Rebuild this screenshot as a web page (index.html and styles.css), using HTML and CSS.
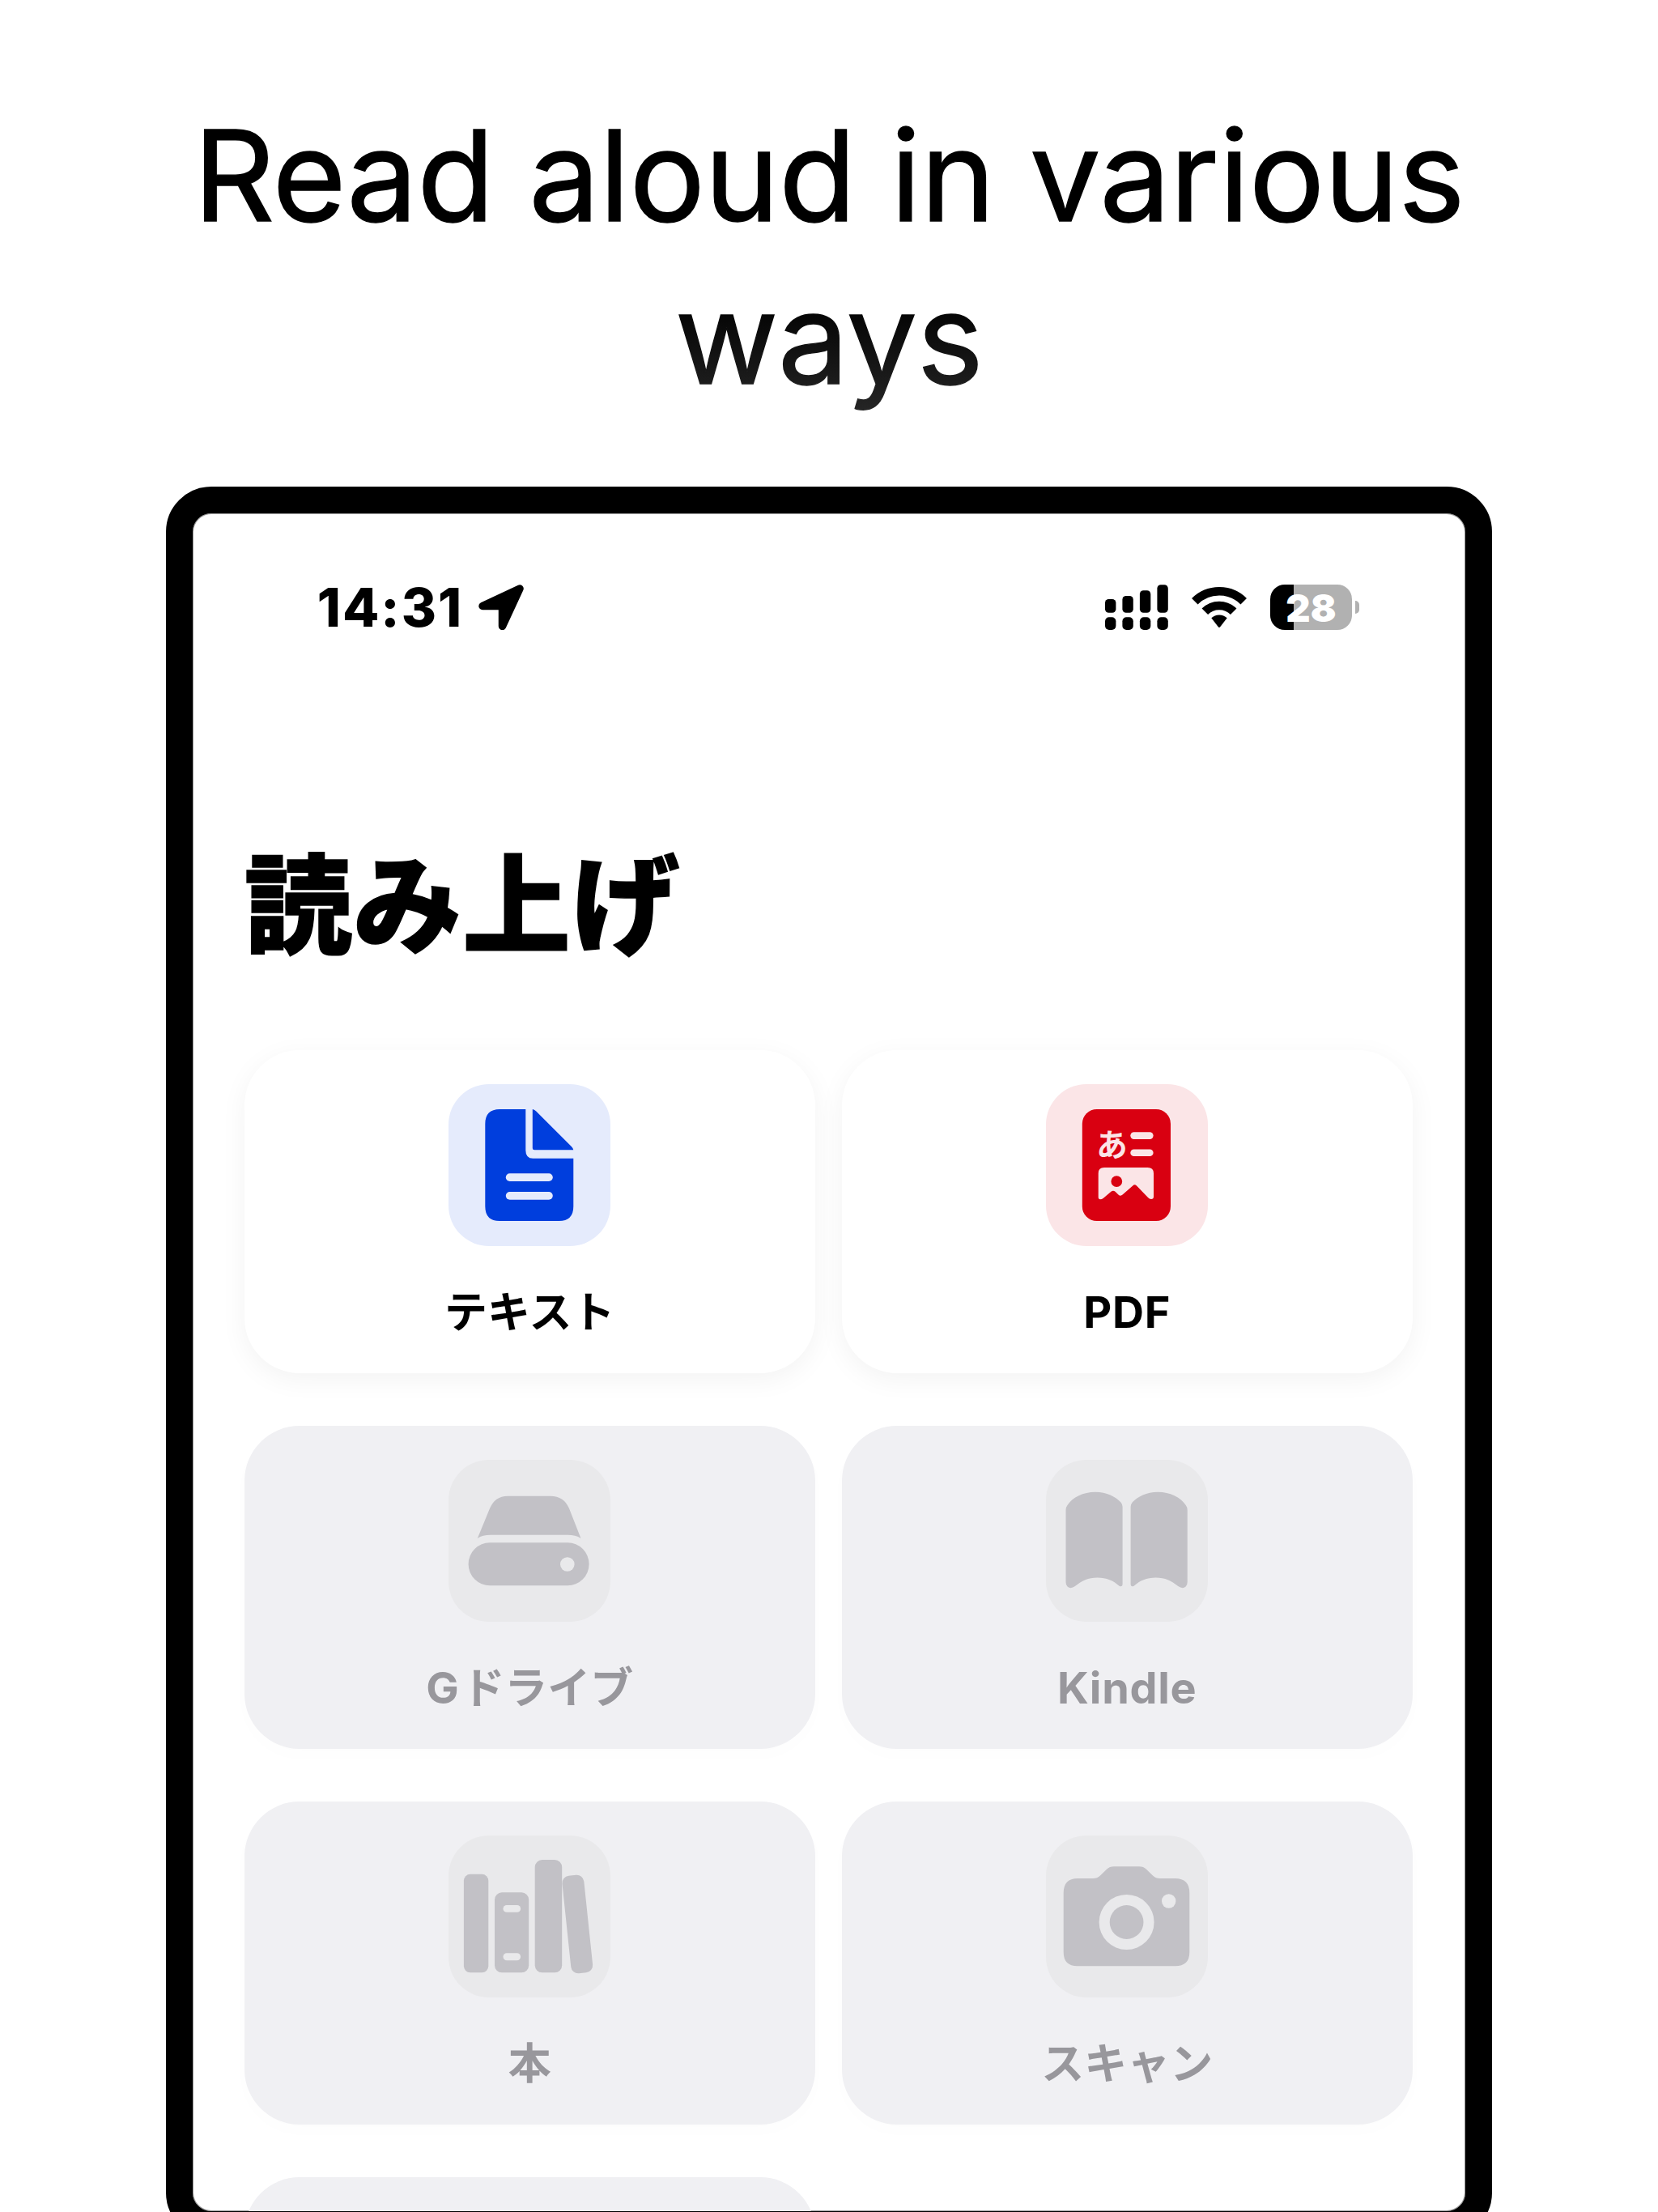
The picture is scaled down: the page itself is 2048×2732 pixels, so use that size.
FILE: index.html
```html
<!DOCTYPE html>
<html lang="ja">
<head>
<meta charset="utf-8">
<title>Read aloud in various ways</title>
<link rel="stylesheet" href="styles.css">
</head>
<body>
<h1 class="headline" lang="en">Read aloud in various ways</h1>
<main class="device">
  <header class="status">
    <div class="status-left">
      <span class="time">14:31</span>
      <svg class="location" viewBox="0 0 56 56"><path d="M5 26.5 51 5 29.5 51.5V26.5Z" stroke="#000" stroke-width="9.5" stroke-linejoin="round"/></svg>
    </div>
    <div class="status-right">
      <svg class="signal" viewBox="0 0 78 56">
        <rect x="0" y="18" width="13.4" height="16.7" rx="4.5"/><rect x="21.4" y="14" width="13.4" height="20.7" rx="4.5"/><rect x="42.9" y="7.3" width="13.4" height="27.4" rx="4.5"/><rect x="64.4" y="0.3" width="13.4" height="34.4" rx="4.5"/>
        <rect x="0" y="40.3" width="13.4" height="15.7" rx="5"/><rect x="21.4" y="40.3" width="13.4" height="15.7" rx="5"/><rect x="42.9" y="40.3" width="13.4" height="15.7" rx="5"/><rect x="64.4" y="40.3" width="13.4" height="15.7" rx="5"/>
      </svg>
      <svg class="wifi" viewBox="0 0 68 56"><g fill="none" stroke="#000" stroke-width="10.6"><path d="M3.8 20.8A42.7 42.7 0 0 1 64.2 20.8"/><path d="M16.3 33.3A25 25 0 0 1 51.7 33.3"/></g><path d="M24.3 41.3A14 14 0 0 1 43.7 41.3L35.2 52.3Q34 53.8 32.8 52.3Z"/></svg>
      <div class="battery"><div class="battery-body"><span class="battery-level">28</span></div><div class="battery-nub"></div></div>
    </div>
  </header>
  <h2 class="title">読み上げ</h2>
  <section class="grid">
    <article class="card">
      <svg class="icon icon-text" viewBox="0 0 200 200">
        <path d="M63.3 31H95.3V81.7Q95.3 91.7 104.3 91.7H154.3V151Q154.3 169 136.3 169H63.3Q45.3 169 45.3 151V49Q45.3 31 63.3 31Z"/>
        <path d="M103.8 31Q106 31.2 108 33.2L151.8 77Q154.3 79.5 154.3 81.3H106.3Q103.8 81.3 103.8 78.8Z"/>
        <g class="cut"><rect x="70.8" y="110.3" width="58" height="9.7" rx="4.8"/><rect x="70.8" y="133" width="58" height="9.7" rx="4.8"/></g>
      </svg>
      <h3 class="label">テキスト</h3>
    </article>
    <article class="card">
      <svg class="icon icon-pdf" viewBox="0 0 200 200">
        <rect x="44.8" y="31" width="109.2" height="138" rx="18"/>
        <g class="cut"><text class="kana" x="81.5" y="88.8" text-anchor="middle">あ</text>
        <rect x="104.3" y="59.3" width="28.3" height="8.6" rx="4.3"/><rect x="104.3" y="80.5" width="28.3" height="8.6" rx="4.3"/>
        <path fill-rule="evenodd" d="M72 103H125.5Q133 103 133 110V139Q133 142 130 142Q127.6 142 126 140L112 125.6Q109.6 123 107.2 125.4L94.6 136.6Q92 139 89.4 136.4L85.6 132.8Q83 130.5 80.4 132.8L71 140.8Q69 142.3 67 142.3Q64.7 142.3 64.7 139.5V110Q64.7 103 72 103ZM87.3 113.2A6.9 6.9 0 1 0 87.3 127A6.9 6.9 0 1 0 87.3 113.2Z"/></g>
      </svg>
      <h3 class="label"><span class="latin">PDF</span></h3>
    </article>
    <article class="card disabled">
      <svg class="icon" viewBox="0 0 200 200">
        <path d="M73 44.7H126Q142.5 44.7 149 60L163.5 96.9Q157 92.7 147 92.7H52Q42 92.7 35.8 96.9L51 60Q57.5 44.7 73 44.7Z"/>
        <rect x="24.6" y="102.3" width="149" height="53" rx="26.5"/><circle class="cut" cx="146.8" cy="129" r="8.8"/>
      </svg>
      <h3 class="label"><span class="latin initial">G</span>ドライブ</h3>
    </article>
    <article class="card disabled">
      <svg class="icon" viewBox="0 0 200 200">
        <path d="M24.5 62Q24.5 58.5 26.5 56C33 46 46 39.7 61 39.7C75 39.7 86 45.5 92.5 52.5Q94.6 55 94.6 58V153Q94.6 157.5 90.5 155.7C83 149 75 145.4 63.5 145.4C52 145.4 44.5 149 36 156Q30.5 160 26.5 156.5Q24.5 154.5 24.5 151Z"/>
        <path d="M174.7 62Q174.7 58.5 172.7 56C166.2 46 153.2 39.7 138.2 39.7C124.2 39.7 113.2 45.5 106.7 52.5Q104.6 55 104.6 58V153Q104.6 157.5 108.7 155.7C116.2 149 124.2 145.4 135.7 145.4C147.2 145.4 154.7 149 163.2 156Q168.7 160 172.7 156.5Q174.7 154.5 174.7 151Z"/>
      </svg>
      <h3 class="label"><span class="latin">Kindle</span></h3>
    </article>
    <article class="card disabled">
      <svg class="icon" viewBox="0 0 200 200">
        <rect x="18.9" y="47.8" width="30.4" height="121.5" rx="8"/>
        <rect x="57" y="70.3" width="42.2" height="99" rx="9"/>
        <rect x="106.7" y="30" width="33.5" height="139.3" rx="9"/>
        <rect x="145.8" y="49" width="27" height="121" rx="9" transform="rotate(-6 159.3 109.5)"/>
        <g class="cut"><rect x="67.5" y="86" width="21.6" height="8.8" rx="4.4"/><rect x="67.5" y="145.3" width="21.6" height="9" rx="4.5"/></g>
      </svg>
      <h3 class="label">本</h3>
    </article>
    <article class="card disabled">
      <svg class="icon" viewBox="0 0 200 200">
        <path d="M39 53H58Q63.5 53 67 49.5L75 41.7Q78.5 38.3 84 38.3H115Q120.5 38.3 124 41.7L132 49.5Q135.5 53 141 53H159.5Q177.3 53 177.3 71V144Q177.3 161.3 159.5 161.3H39Q21.7 161.3 21.7 144V71Q21.7 53 39 53Z"/>
        <circle class="cut" cx="99.6" cy="107" r="34"/><circle cx="99.6" cy="107" r="20.9"/><circle class="cut" cx="151.7" cy="81" r="8.7"/>
      </svg>
      <h3 class="label">スキャン</h3>
    </article>
    <article class="card disabled"></article>
  </section>
</main>
</body>
</html>
```
FILE: styles.css
```css
* { box-sizing: border-box; }

body {
  margin: 0;
  height: 2732px;
  padding-top: 115.5px;
  overflow: hidden;
  background: #fff;
  color: #000;
  font-family: Inter, "Noto Sans CJK JP", sans-serif;
}

h1, h2, h3 { margin: 0; }
svg { display: block; flex: none; }

.headline {
  width: 1640px;
  height: 485.5px;
  margin: 0 auto;
  text-align: center;
  font-size: 156px;
  font-weight: 400;
  line-height: 201.7px;
  letter-spacing: -0.65px;
  background: linear-gradient(#000 250px, #262626 395px);
  -webkit-background-clip: text;
  background-clip: text;
  color: transparent;
  -webkit-text-stroke: 1.4px transparent;
}

.device {
  width: 1638.4px;
  height: 2163px;
  margin: 0 auto;
  padding: 88px 65.5px 0 64px;
  border: 33.4px solid #000;
  border-radius: 56px;
  overflow: hidden;
  background: #fff;
  box-shadow: inset 0 0 0 1px #999;
}

.status {
  display: flex;
  justify-content: space-between;
  height: 56px;
  padding: 0 65.5px 0 90px;
}

.status-left, .status-right { display: flex; align-items: center; }
.status-left { gap: 19px; }

.time {
  font-size: 66px;
  font-weight: 800;
  line-height: 58px;
  letter-spacing: 2px;
}

.location { width: 56px; height: 56px; }
.signal { width: 78px; height: 56px; margin-right: 29px; }
.wifi { width: 68px; height: 56px; margin-right: 29px; }

.battery { display: flex; align-items: center; gap: 4px; }

.battery-body {
  width: 100.5px;
  height: 56px;
  border-radius: 18px;
  background: linear-gradient(90deg, #000 29px, #b1b1b1 29px);
  text-align: center;
}

.battery-level {
  color: #fff;
  font-size: 47px;
  font-weight: 900;
  line-height: 57px;
}

.battery-nub {
  width: 5.5px;
  height: 16px;
  border-radius: 0 6px 6px 0;
  background: #b1b1b1;
}

.title {
  margin-top: 261px;
  font-family: "Noto Sans CJK JP", sans-serif;
  font-size: 133.5px;
  font-weight: 900;
  line-height: 140px;
  letter-spacing: 1.2px;
  -webkit-text-stroke: 1.5px #000;
}

.grid {
  display: grid;
  grid-template-columns: 1fr 1fr;
  grid-auto-rows: 399px;
  gap: 65px 33px;
  margin-top: 118px;
}

.card {
  --ink: #000;
  --tint: #fff;
  display: flex;
  flex-direction: column;
  align-items: center;
  gap: 50px;
  padding-top: 41.5px;
  border-radius: 68px;
  background: #fff;
  box-shadow: 0 8px 33px rgba(0, 0, 0, 0.05);
}

.icon {
  width: 200px;
  height: 200px;
  border-radius: 50px;
  background: var(--tint);
  fill: var(--ink);
}

.icon-text { --ink: #003edd; --tint: #e5ebfc; }
.icon-pdf { --ink: #d90011; --tint: #fbe5e7; }
.cut { fill: var(--tint); }

.kana {
  font-family: "Noto Sans CJK JP", sans-serif;
  font-size: 38.5px;
  font-weight: 700;
}

.label {
  font-size: 53px;
  font-weight: 600;
  line-height: 64px;
}

.latin {
  font-size: 54px;
  font-weight: 700;
  letter-spacing: 0.7px;
}

.initial { margin-right: 3px; }

.disabled {
  --ink: #c2c1c6;
  --tint: #e9e9eb;
  background: #f0f0f3;
  color: #98979c;
  box-shadow: 0 8px 24px rgba(0, 0, 0, 0.012);
}
```
